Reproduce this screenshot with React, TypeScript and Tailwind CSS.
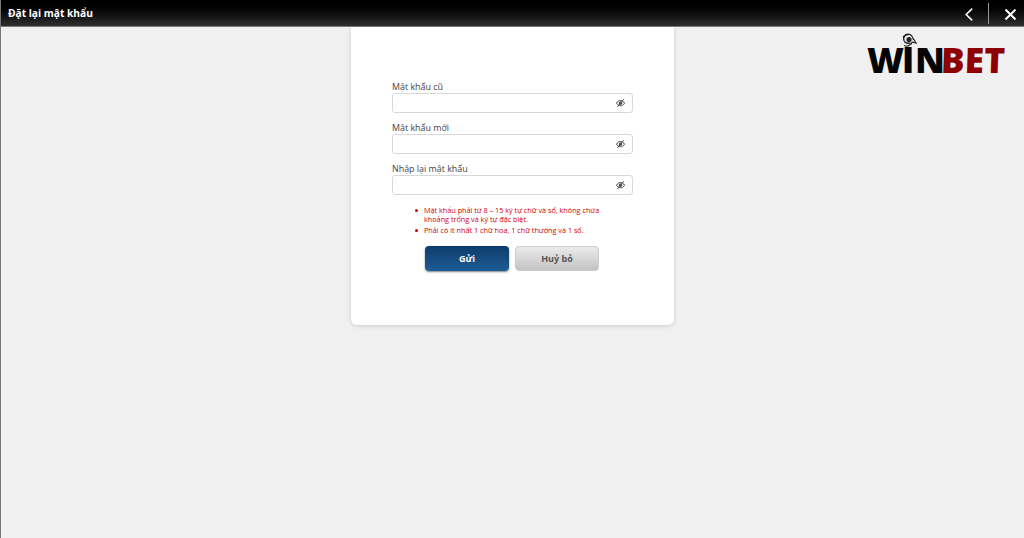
import { useState } from "react";

interface PasswordFieldProps {
  id: string;
  label: string;
}

function EyeOffIcon() {
  return (
    <svg viewBox="0 0 18 16" className="h-2 w-[9px]" fill="none" stroke="#444" strokeWidth="2">
      <path d="M1 8.5C3 4.5 6 3 9 3s6 1.500 8 5.500C15 12 12 13.500 9 13.500S3 12 1 8.500Z" />
      <circle cx="9" cy="8.3" r="2.600" fill="#777" />
      <path d="M3 15.500 15.500 0.500" />
    </svg>
  );
}

function PasswordField({ id, label }: PasswordFieldProps) {
  const [visible, setVisible] = useState(false);

  return (
    <div className="mb-[9px]">
      <label htmlFor={id} className="block h-3 text-[8.900px] leading-3 whitespace-nowrap text-[#444]">
        {label}
      </label>
      <div className="flex h-5 w-[241px] items-center rounded-[3px] border border-[#d8d8d8] bg-white pr-[7px]">
        <input id={id} type={visible ? "text" : "password"} className="h-full min-w-0 flex-1 px-2 text-[9px] outline-none" />
        <button type="button" aria-label={label} onClick={() => setVisible(!visible)}>
          <EyeOffIcon />
        </button>
      </div>
    </div>
  );
}

function Logo() {
  return (
    <svg viewBox="0 0 164 64" className="h-16 w-[164px] font-['Open_Sans',sans-serif]" fontSize="35" fontWeight="800">
      <g fill="#050505">
        <text x="7" y="46" textLength="37" lengthAdjust="spacingAndGlyphs">W</text>
        <text x="43.300" y="45" fontSize="32" fontWeight="900" stroke="#050505" strokeWidth="2" className="font-[Lato,sans-serif]">I</text>
        <text x="55" y="46" textLength="30" lengthAdjust="spacingAndGlyphs">N</text>
      </g>
      <text x="80.500" y="46" textLength="64" lengthAdjust="spacingAndGlyphs" fill="#8f0000" transform="translate(1.600 0) skewX(-2)">
        BET
      </text>
      {/* rose over the I */}
      <g fill="none" stroke="#222" strokeWidth="1.200">
        <circle cx="49" cy="12.500" r="2" fill="#222" />
        <path d="M44 14c-1-4 1-6.500 5-6.500M45 8c4-2 8 0 8.500 5M43.500 10c-.5 4 2 7 7 6M44 18.500c4 1.500 7 0 8.500-4M53 11l3 5-4-1M43 10l3-2.500M44.500 15.500l7 2" />
      </g>
    </svg>
  );
}

export default function App() {
  return (
    <div className="flex h-screen flex-col overflow-hidden border-l border-[#777] bg-[#f0f0f0] font-['Open_Sans','Noto_Sans',sans-serif]">
      <header className="flex h-[27px] shrink-0 items-center border-b border-[#777] bg-linear-to-b from-black to-[#303030] text-white">
        <h1 className="ml-[7px] text-[10.200px] leading-none font-bold">Đặt lại mật khẩu</h1>
        <div className="ml-auto flex h-full items-center">
          <svg viewBox="0 0 8 13" className="mt-[2px] mr-[15px] h-[13px] w-2" fill="none" stroke="white" strokeWidth="1.600">
            <path d="M7.200 0.700 1.200 6.500l6 5.800" />
          </svg>
          <div className="h-[21px] w-px bg-[#999]" />
          <svg viewBox="0 0 10 10" className="mt-[2px] mr-2 ml-4 size-[11px]" fill="none" stroke="white" strokeWidth="1.800">
            <path d="M0.500 0.500l9 9M9.500 0.500l-9 9" />
          </svg>
        </div>
      </header>

      <main className="grid grid-cols-[350px_323px_1fr] items-start">
        <form className="col-start-2 h-[298px] rounded-b-md bg-white px-[41px] pt-[54px] shadow-[0_1px_4px_rgba(0,0,0,0.15)]">
          <PasswordField id="old-password" label="Mật khẩu cũ" />
          <PasswordField id="new-password" label="Mật khẩu mới" />
          <PasswordField id="repeat-password" label="Nhập lại mật khẩu" />

          <ul className="mt-[11px] ml-8 text-[7.250px] leading-[9px] text-[#d00000]">
            <li className="relative mb-[2px] whitespace-nowrap before:absolute before:top-[3px] before:-left-[9px] before:size-[3px] before:rounded-full before:bg-[#d00000]">
              Mật khẩu phải từ 8 – 15 ký tự chữ và số, không chứa
              <br />
              khoảng trống và ký tự đặc biệt.
            </li>
            <li className="relative whitespace-nowrap before:absolute before:top-[3px] before:-left-[9px] before:size-[3px] before:rounded-full before:bg-[#d00000]">
              Phải có ít nhất 1 chữ hoa, 1 chữ thường và 1 số.
            </li>
          </ul>

          <div className="mt-[11px] ml-[33px] flex gap-[6px] text-[9px] font-bold">
            <button type="submit" className="h-[25px] w-[84px] rounded bg-linear-to-b from-[#0c3d6b] to-[#1e5c96] text-white shadow-[0_1px_2px_rgba(0,0,0,0.5)]">
              Gửi
            </button>
            <button type="button" className="h-[25px] w-[84px] rounded border border-[#ccc] bg-linear-to-b from-[#ebebeb] to-[#c3c3c3] text-[#555]">
              Huỷ bỏ
            </button>
          </div>
        </form>
        <div className="flex justify-end">
          <Logo />
        </div>
      </main>
    </div>
  );
}
